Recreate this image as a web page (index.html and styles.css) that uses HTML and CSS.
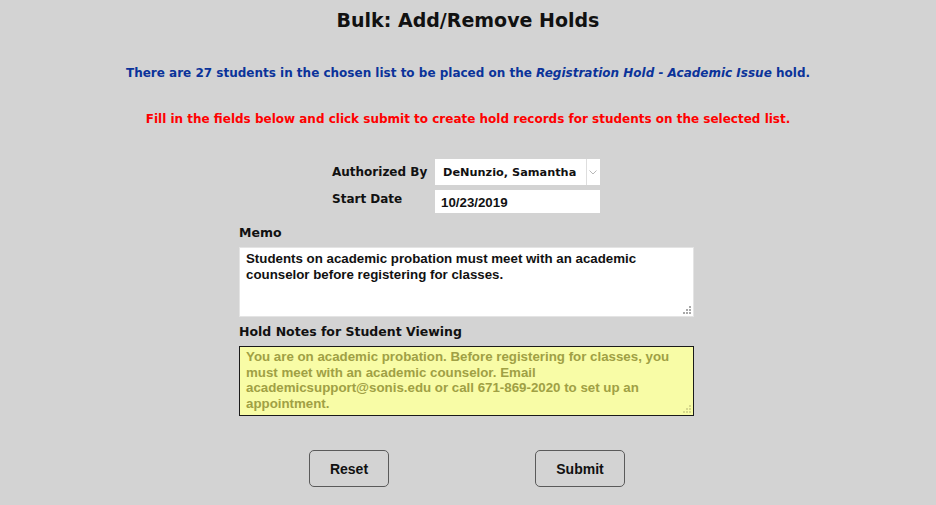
FILE: index.html
```html
<!DOCTYPE html>
<html>
<head>
<meta charset="utf-8">
<title>Bulk: Add/Remove Holds</title>
<link rel="stylesheet" href="styles.css">
</head>
<body>
<div class="page">
  <h1 class="title">Bulk: Add/Remove Holds</h1>
  <p class="info">There are 27 students in the chosen list to be placed on the <em>Registration Hold - Academic Issue</em> hold.</p>
  <p class="warn">Fill in the fields below and click submit to create hold records for students on the selected list.</p>
  <form class="holdform">
    <div class="fields">
      <label class="flabel lab1">Authorized By</label>
      <div class="selwrap">
        <select class="sel"><option>DeNunzio, Samantha</option></select>
        <span class="arrow"><svg width="8" height="5" viewBox="0 0 8 5"><path d="M0.5 0.5 L4 4 L7.5 0.5" fill="none" stroke="#b8b8b8" stroke-width="1"/></svg></span>
      </div>
      <label class="flabel lab2">Start Date</label>
      <input class="date" type="text" value="10/23/2019">
    </div>
    <div class="block">
      <div class="blabel">Memo</div>
      <div class="tawrap">
        <textarea class="memo">Students on academic probation must meet with an academic counselor before registering for classes.</textarea>
        <svg class="grip" width="8" height="8" viewBox="0 0 8 8"><g fill="#a8a8a8"><rect x="6" y="0" width="2" height="2"/><rect x="3" y="3" width="2" height="2"/><rect x="6" y="3" width="2" height="2"/><rect x="0" y="6" width="2" height="2"/><rect x="3" y="6" width="2" height="2"/><rect x="6" y="6" width="2" height="2"/></g></svg>
      </div>
      <div class="blabel second">Hold Notes for Student Viewing</div>
      <div class="tawrap">
        <textarea class="notes">You are on academic probation. Before registering for classes, you must meet with an academic counselor. Email academicsupport@sonis.edu or call 671-869-2020 to set up an appointment.</textarea>
        <svg class="grip" width="8" height="8" viewBox="0 0 8 8"><g fill="#d6d88c"><rect x="6" y="0" width="2" height="2"/><rect x="3" y="3" width="2" height="2"/><rect x="6" y="3" width="2" height="2"/><rect x="0" y="6" width="2" height="2"/><rect x="3" y="6" width="2" height="2"/><rect x="6" y="6" width="2" height="2"/></g></svg>
      </div>
    </div>
    <div class="buttons">
      <button type="button" class="btn reset">Reset</button>
      <button type="button" class="btn submit">Submit</button>
    </div>
  </form>
</div>
</body>
</html>
```
FILE: styles.css
```css
html, body {
  margin: 0;
  padding: 0;
  background: #d3d3d3;
}
body {
  font-family: "DejaVu Sans", "Liberation Sans", sans-serif;
  color: #111;
}
.page {
  padding-top: 8px;
  text-align: center;
}
.title {
  margin: 0;
  font-size: 19px;
  line-height: 24px;
  font-weight: bold;
  color: #111;
}
.info {
  margin: 33px 0 0;
  font-size: 12px;
  line-height: 16px;
  font-weight: bold;
  color: #0b339a;
}
.warn {
  margin: 30px 0 0;
  font-size: 12px;
  line-height: 16px;
  font-weight: bold;
  color: #ff0000;
}
.holdform {
  margin-top: 32px;
  text-align: left;
}
.fields {
  width: 268px;
  margin: 0 0 0 332px;
  display: grid;
  grid-template-columns: 103px 165px;
  row-gap: 5px;
}
.flabel {
  font-size: 12px;
  font-weight: bold;
  color: #111;
  white-space: nowrap;
}
.lab1 { align-self: center; }
.lab2 { padding-top: 2px; }
.selwrap {
  position: relative;
  height: 26px;
  background: #fff;
}
.sel {
  appearance: none;
  -webkit-appearance: none;
  border: none;
  outline: none;
  background: #fff;
  width: 152px;
  height: 26px;
  padding: 0 0 0 8px;
  margin: 0;
  font-family: "DejaVu Sans", sans-serif;
  font-weight: bold;
  font-size: 11.3px;
  color: #111;
  border-right: 1px solid #dedede;
}
.arrow {
  position: absolute;
  right: 3px;
  top: 11px;
  line-height: 0;
}
.date {
  border: none;
  outline: none;
  background: #fff;
  height: 23px;
  width: 165px;
  box-sizing: border-box;
  padding: 2px 0 0 6px;
  margin: 0;
  font-family: "Liberation Sans", Arial, sans-serif;
  font-weight: bold;
  font-size: 13.3px;
  color: #111;
}
.block {
  width: 455px;
  margin: 12px 0 0 239px;
}
.blabel {
  font-size: 12.5px;
  font-weight: bold;
  color: #111;
  line-height: 16px;
  margin-bottom: 6px;
}
.blabel.second {
  margin-top: 7px;
}
.tawrap {
  position: relative;
}
.grip {
  position: absolute;
  right: 3px;
  bottom: 3px;
}
textarea {
  display: block;
  box-sizing: border-box;
  width: 455px;
  height: 70px;
  margin: 0;
  resize: none;
  font-family: "Liberation Sans", Arial, sans-serif;
  font-weight: bold;
  font-size: 13.3px;
  outline: none;
}
.memo {
  border: 1px solid #e4e4e4;
  background: #fff;
  color: #111;
  line-height: 16px;
  padding: 3px 6px;
}
.notes {
  border: 1px solid #1a1a1a;
  background: #f8fca6;
  color: #a0a044;
  line-height: 15.5px;
  padding: 2px 6px;
}
.buttons {
  display: flex;
  margin: 34px 0 0 309px;
  gap: 146px;
}
.btn {
  height: 37px;
  box-sizing: border-box;
  border: 1px solid #5a5a5a;
  border-radius: 5px;
  background: #d3d3d3;
  font-family: "Liberation Sans", Arial, sans-serif;
  font-weight: bold;
  font-size: 14px;
  color: #111;
  padding: 0;
}
.reset { width: 80px; }
.submit { width: 90px; }
```
